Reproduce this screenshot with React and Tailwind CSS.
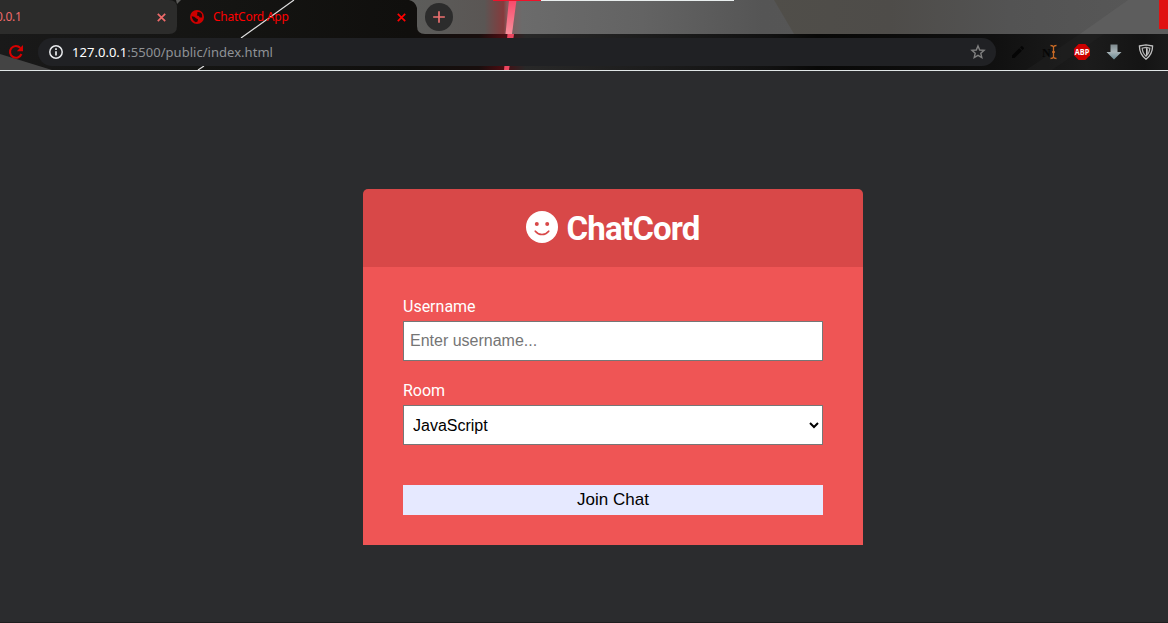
import { MdAdd, MdEdit } from "react-icons/md";

function ThemeBackdrop() {
  return (
    <svg className="absolute inset-0" width="1168" height="70" viewBox="0 0 1168 70">
      <defs>
        <linearGradient id="frame" x1="417" x2="1168" y1="0" y2="0" gradientUnits="userSpaceOnUse">
          <stop offset="0" stopColor="#5c5c5a" />
          <stop offset="0.09" stopColor="#5a5654" />
          <stop offset="0.115" stopColor="#853a3c" />
          <stop offset="0.12" stopColor="#855a5c" />
          <stop offset="0.14" stopColor="#6b6b6b" />
          <stop offset="0.3" stopColor="#636363" />
          <stop offset="0.46" stopColor="#555555" />
          <stop offset="1" stopColor="#5a5a5a" />
        </linearGradient>
        <linearGradient id="dusk" x1="770" x2="1168" y1="0" y2="0" gradientUnits="userSpaceOnUse">
          <stop offset="0" stopColor="#504e49" />
          <stop offset="0.3" stopColor="#4e4c49" />
          <stop offset="0.6" stopColor="#535353" />
          <stop offset="1" stopColor="#585858" />
        </linearGradient>
        <linearGradient id="bar" x1="0" x2="1168" y1="0" y2="0" gradientUnits="userSpaceOnUse">
          <stop offset="0" stopColor="#191919" />
          <stop offset="0.2" stopColor="#141412" />
          <stop offset="0.35" stopColor="#100f0d" />
          <stop offset="0.41" stopColor="#180e0d" />
          <stop offset="0.43" stopColor="#4a0c11" />
          <stop offset="0.45" stopColor="#282828" />
          <stop offset="0.66" stopColor="#111111" />
          <stop offset="0.7" stopColor="#080807" />
          <stop offset="0.85" stopColor="#101010" />
          <stop offset="0.93" stopColor="#1c1c1c" />
          <stop offset="0.98" stopColor="#141414" />
          <stop offset="1" stopColor="#1a1a1a" />
        </linearGradient>
        <linearGradient id="beam" x1="0" x2="0" y1="0" y2="34" gradientUnits="userSpaceOnUse">
          <stop offset="0" stopColor="#f8486a" />
          <stop offset="1" stopColor="#f8909c" />
        </linearGradient>
      </defs>
      <rect width="1168" height="70" fill="url(#bar)" />
      <path d="M417 0H1168V34H425Q417 34 417 26Z" fill="url(#frame)" />
      <path d="M774 0H1168V34H794Z" fill="url(#dusk)" />
      <path d="M1128 0H1168V34H1080Z" fill="#5d5d5d" />
      <path d="M1080 34H1104L1052 70H1026Z" fill="#222" opacity="0.4" />
      <path d="M0 0H169Q177 0 177 8V26Q177 34 169 34H0Z" fill="#2c2c2b" />
      <path d="M176 0H181L177 4Z" fill="#5c5c5a" />
      <path d="M409 0H417V8Q415 1 409 0Z" fill="#5c5c5a" />
      <path d="M0 54L52 70H0Z" fill="#444444" />
      <path d="M294 0L241 38M204 66L198 70" stroke="#dedede" strokeWidth="1.2" />
      <path d="M509 0H516.500L512 34H505.500Z" fill="url(#beam)" />
      <path d="M507.500 34H514L509 70H504Z" fill="#ec4660" />
      <rect x="493" width="48" height="1" fill="#f0112a" />
      <rect x="541" width="193" height="1" fill="#e9eeee" />
      <rect x="1159" width="9" height="29" fill="#e01212" />
    </svg>
  );
}

function GlobeIcon() {
  return (
    <svg width="14" height="14" viewBox="0 0 14 14">
      <circle cx="7" cy="7" r="7" fill="#d00000" />
      <path
        d="M7.200 2.200Q10.500 1.700 12 4.200L12.200 7.400L9.800 7.600L8.800 6L6.800 5.400L7.400 3.800Z M1.700 6.300L4.200 6.700L6.400 8.600L8 9.200L7.600 11.400L5.800 12.200Q2.300 10.900 1.700 6.300Z"
        fill="#240808"
      />
    </svg>
  );
}

function CloseIcon() {
  return (
    <svg className="mr-[11px]" width="9" height="9" viewBox="0 0 9 9">
      <path d="M0.800 0.800L8.200 8.200M8.200 0.800L0.800 8.200" stroke="currentColor" strokeWidth="1.700" />
    </svg>
  );
}

function RefreshIcon() {
  return (
    <svg className="ml-[8px]" width="16" height="16" viewBox="0 0 16 16" fill="none">
      <path d="M13.400 10A5.900 5.900 0 1 1 12.300 3.900" stroke="#d60000" strokeWidth="2.100" />
      <path d="M15 1V7.200H8.800Z" fill="#d60000" />
    </svg>
  );
}

function InfoIcon() {
  return (
    <svg width="16" height="16" viewBox="0 0 16 16" fill="none">
      <circle cx="8" cy="8" r="6.200" stroke="#e8eaed" strokeWidth="1.500" />
      <path d="M8 7.200V11.600M8 4.300V5.900" stroke="#e8eaed" strokeWidth="1.700" />
    </svg>
  );
}

function StarIcon() {
  return (
    <svg width="16" height="16" viewBox="0 0 16 16" fill="none">
      <path
        d="M8 1.900L9.700 6L14.100 6.400L10.800 9.300L11.800 13.600L8 11.300L4.200 13.600L5.200 9.300L1.900 6.400L6.300 6Z"
        stroke="#808080"
        strokeWidth="1.400"
      />
    </svg>
  );
}

function TabStrip() {
  return (
    <div className="relative flex h-[34px] items-center text-[12px] leading-4">
      <div className="flex w-[177px] items-center text-[#ee6a6a]">
        <span className="-ml-[4px] flex-1 tracking-[-0.3px]">0.0.1</span>
        <CloseIcon />
      </div>
      <div className="flex w-[240px] items-center pl-[13px] text-[#ff0000]">
        <GlobeIcon />
        <span className="ml-[9px] flex-1 whitespace-nowrap tracking-[-0.25px]">ChatCord App</span>
        <CloseIcon />
      </div>
      <div className="ml-[8px] grid size-7 place-items-center rounded-full bg-[#2c2c2c] text-[#ee7070]">
        <MdAdd className="size-[20px]" />
      </div>
    </div>
  );
}

function TextCursorIcon() {
  return (
    <svg width="16" height="16" viewBox="0 0 16 16">
      <text x="0" y="12.500" fontSize="12" fontWeight="700" fontFamily="Liberation Serif, serif" fill="#060606">N</text>
      <path d="M8.500 1.500Q11 1.500 11.500 3Q12 1.500 14.500 1.500M11.500 3V13M8.500 14.500Q11 14.500 11.500 13Q12 14.500 14.500 14.500M10 8H13" fill="none" stroke="#c96a25" strokeWidth="1.300" />
    </svg>
  );
}

function AdBlockIcon() {
  return (
    <svg width="16" height="16" viewBox="0 0 16 16">
      <path d="M4.700 0H11.300L16 4.700V11.300L11.300 16H4.700L0 11.300V4.700Z" fill="#cc0000" />
      <text x="0.800" y="11" fontSize="8.500" fontWeight="700" fontFamily="Open Sans, sans-serif" textLength="14.500" lengthAdjust="spacingAndGlyphs" fill="#fff">ABP</text>
    </svg>
  );
}

function DownloadIcon() {
  return (
    <svg width="16" height="16" viewBox="0 0 16 16">
      <defs>
        <linearGradient id="arrow" x1="0" x2="0" y1="0" y2="1">
          <stop offset="0" stopColor="#7d898d" />
          <stop offset="0.5" stopColor="#a8b4b8" />
          <stop offset="1" stopColor="#688892" />
        </linearGradient>
      </defs>
      <path d="M4.500 0.500H11.500V8H15.500L8 15.500L0.500 8H4.500Z" fill="url(#arrow)" />
    </svg>
  );
}

function ShieldIcon() {
  return (
    <svg width="16" height="16" viewBox="0 0 16 16" fill="none">
      <path d="M8 0.800Q11 1.200 14.600 2Q14.500 10.500 8 15.200Q1.500 10.500 1.400 2Q5 1.200 8 0.800Z" stroke="#c0c0c0" strokeWidth="1.300" />
      <path d="M8 3.300L11.800 4.200Q11.500 9 8 12.200Q4.500 9 4.200 4.200Z" stroke="#b4b4b4" strokeWidth="1.200" />
      <path d="M8 4L9.700 4.500V10L8 11.700Z" fill="#c8c8c8" />
    </svg>
  );
}

function SmileIcon() {
  return (
    <svg className="mb-[2px] mr-[8px]" width="32" height="32" viewBox="0 0 32 32">
      <circle cx="16" cy="16" r="16" fill="#fff" />
      <g fill="#d84848">
        <circle cx="10.800" cy="12.900" r="2" />
        <circle cx="21.200" cy="12.900" r="2" />
      </g>
      <path d="M9.300 20.200Q12 23.500 16 23.500Q20 23.500 22.700 20.200" fill="none" stroke="#d84848" strokeWidth="1.700" strokeLinecap="round" />
    </svg>
  );
}

function AddressRow() {
  return (
    <div className="relative flex h-[36px] items-center">
      <RefreshIcon />
      <div className="ml-[14px] flex h-7 w-[958px] items-center rounded-full bg-[#202124] px-[10px]">
        <InfoIcon />
        <p className="ml-[8px] flex-1 text-[13px] leading-5 tracking-[0.03px] text-[#8f9296]">
          <span className="text-white">127.0.0.1</span>:5500/public/index.html
        </p>
        <StarIcon />
      </div>
      <div className="ml-[14px] flex items-center gap-4">
        <MdEdit className="size-4 text-[#050505]" />
        <TextCursorIcon />
        <AdBlockIcon />
        <DownloadIcon />
        <ShieldIcon />
      </div>
    </div>
  );
}

export default function App() {
  return (
    <div className="flex h-[623px] w-[1168px] flex-col overflow-hidden border-b border-[#1e1e1f] bg-[#2b2c2e]">
      <header className="relative h-[71px] shrink-0 border-b border-[#e0e6e6] font-['Noto_Sans',sans-serif]">
        <ThemeBackdrop />
        <TabStrip />
        <AddressRow />
      </header>

      <main className="ml-[363px] mt-[118px] w-[500px] font-[Roboto,sans-serif] text-white">
        <header className="flex h-[78px] items-center justify-center rounded-t-[5px] bg-[#d84848]">
          <SmileIcon />
          <h1 className="mt-px text-[33px] font-bold leading-10 tracking-[-0.8px]">ChatCord</h1>
        </header>
        <form className="bg-[#ef5555] px-10 pb-[30px] pt-[30px]">
          <div className="mb-5">
            <label className="mb-[5px] block text-[16px] leading-[19px]" htmlFor="username">Username</label>
            <input
              id="username"
              className="block h-10 w-full border border-[#767676] bg-white px-[6px] font-['Liberation_Sans',sans-serif] text-[16px] text-black placeholder:text-[#757575]"
              placeholder="Enter username..."
            />
          </div>
          <div className="mb-10">
            <label className="mb-[5px] block text-[16px] leading-[19px]" htmlFor="room">Room</label>
            <select
              id="room"
              className="block h-10 w-full border border-[#767676] bg-white px-[5px] font-['Liberation_Sans',sans-serif] text-[16px] text-black"
            >
              <option>JavaScript</option>
            </select>
          </div>
          <button
            type="button"
            className="block h-[30px] w-full bg-[#e6e9ff] font-['Liberation_Sans',sans-serif] text-[17px] leading-[30px] text-black"
          >
            Join Chat
          </button>
        </form>
      </main>
    </div>
  );
}
